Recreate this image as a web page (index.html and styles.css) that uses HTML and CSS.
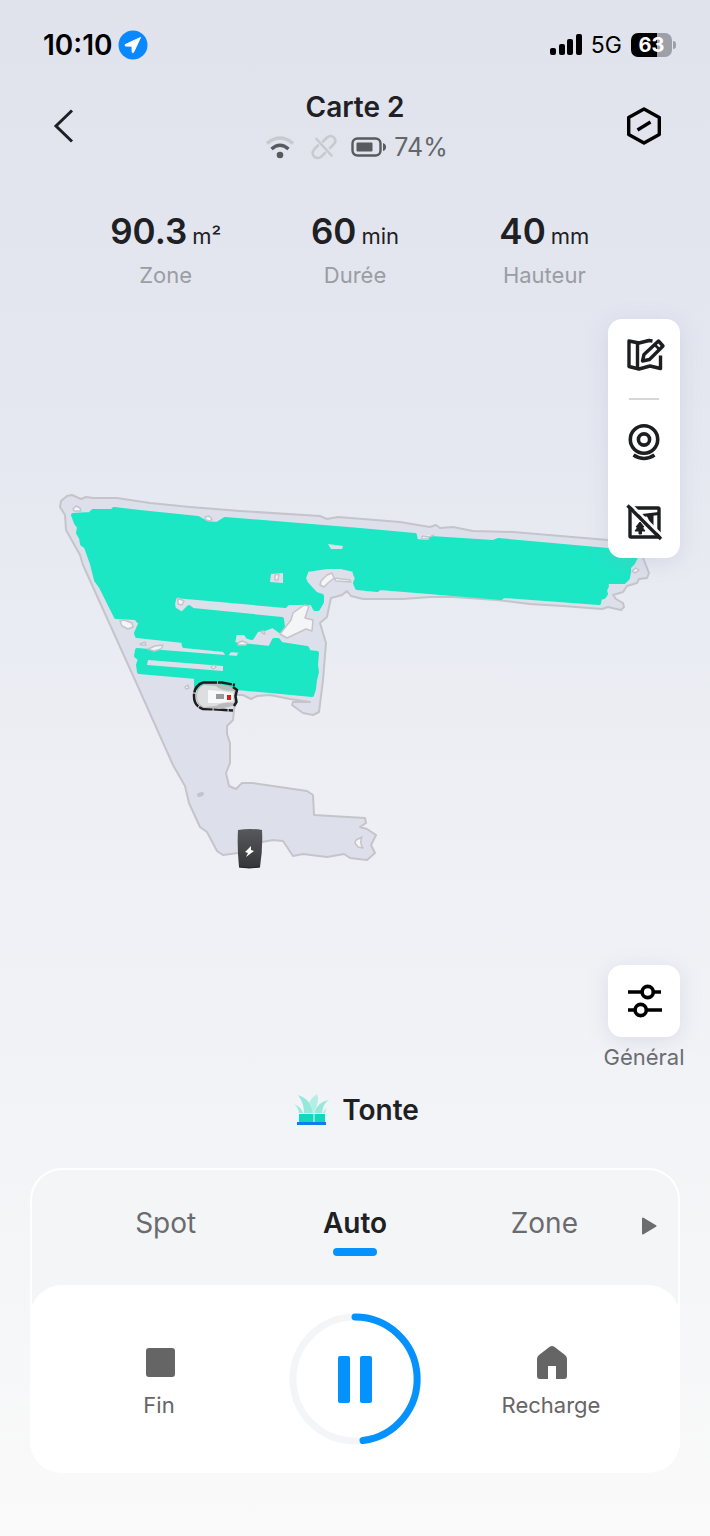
FILE: index.html
```
<!DOCTYPE html>
<html lang="fr">

<head>
    <meta charset="UTF-8">
    <meta name="viewport" content="width=device-width, initial-scale=1.0">
    <title>Carte 2</title>
    <link rel="stylesheet" href="styles.css">
</head>

<body>
    <div class="status-bar">
        <div class="status-left">
            <span class="clock">10:10</span>
            <svg width="30" height="30" viewBox="0 0 30 30">
                <circle cx="15" cy="15" r="14.5" fill="#0a88ff" />
                <path d="M22.5 7.5 L7.2 14.6 Q6.6 15.8 7.8 16 L14 16.2 L14.2 22.2 Q14.8 23.4 15.6 22.2 Z" fill="#fff" stroke="#fff" stroke-linejoin="round" />
            </svg>
        </div>
        <div class="status-right">
            <svg width="32" height="22" viewBox="0 0 32 22">
                <rect x="0" y="14" width="6" height="7" rx="2" />
                <rect x="9" y="10" width="6" height="11" rx="2" />
                <rect x="17" y="5" width="6" height="16" rx="2" />
                <rect x="26" y="0" width="6" height="21" rx="2" />
            </svg>
            <span class="network">5G</span>
            <div class="phone-battery"><span>63</span></div>
        </div>
    </div>

    <header class="header">
        <button class="icon-button" aria-label="Retour">
            <svg width="40" height="40" viewBox="0 0 40 40" fill="none" stroke="#1e2023" stroke-width="3">
                <path d="M26 4.500 L10 20 L26 35.500" />
            </svg>
        </button>
        <div class="title">
            <h1>Carte 2</h1>
            <div class="device-state">
                <svg width="30" height="24" viewBox="0 0 30 24" fill="none" stroke-width="3.500">
                    <path d="M2 8.500 Q15 -2.500 28 8.500" stroke="#c8cacf" />
                    <path d="M6.500 14 Q15 6.500 23.500 14" stroke="#575a5f" />
                    <circle cx="15" cy="20" r="3.300" fill="#575a5f" />
                </svg>
                <svg class="link-icon" width="26" height="26" viewBox="0 0 26 26" fill="none" stroke="#c8cacf" stroke-width="2.600" stroke-linecap="round">
                    <path d="M12 7.500 L16 3.500 Q19.500 0.500 23 3.500 Q26 7 22.500 10.500 L19 14" />
                    <path d="M7 11.500 L3.500 15 Q0 19 3 22.500 Q6.500 25.500 10.500 22.500 L14 19" />
                    <path d="M5.500 5 L20.500 21.500" />
                </svg>
                <svg width="36" height="22" viewBox="0 0 36 22">
                    <rect x="1.500" y="2.500" width="28" height="17" rx="5" fill="none" stroke="#575a5f" stroke-width="2.400" />
                    <rect x="5.500" y="6.500" width="16" height="9" rx="1" fill="#575a5f" />
                    <path d="M32 7 Q35 8 35 11 Q35 14 32 15 Z" fill="#575a5f" />
                </svg>
                <span>74%</span>
            </div>
        </div>
        <button class="icon-button" aria-label="Paramètres">
            <svg width="40" height="40" viewBox="0 0 40 40" fill="none" stroke="#000" stroke-width="3.400" stroke-linejoin="round">
                <path d="M20 3 L35.300 11.500 V28.500 L20 37 L4.700 28.500 V11.500 Z" />
                <path d="M13.500 24 L26.500 16" />
            </svg>
        </button>
    </header>

    <div class="stats">
        <div class="stat">
            <div class="stat-value">90.3<small>m²</small></div>
            <div class="stat-label">Zone</div>
        </div>
        <div class="stat">
            <div class="stat-value">60<small>min</small></div>
            <div class="stat-label">Durée</div>
        </div>
        <div class="stat">
            <div class="stat-value">40<small>mm</small></div>
            <div class="stat-label">Hauteur</div>
        </div>
    </div>

    <main class="stage">
        <svg class="map" viewBox="0 319 710 751">
            <!-- garden outline -->
            <path class="ground" d="M60 507 L61 501 L67 496 L72 495 L81 499 L86 497 L93 498 L117 498 L150 503 L190 507 L240 511 L320 516 L327 519 L338 517 L400 522 L430 527 L436 525 L440 528 L453 527 L473 531 L513 532 L608 540 L640 550 L649 573 L647 578 L639 579 L637 583 L627 586 L623 592 L613 595 L616 599 L623 603 L624 607 L621 610 L608 607 L602 609 L563 606 L530 604 L497 600 L453 597 L430 597 L403 599 L363 599 L351 596 L347 591 L342 595 L331 598 L329 607 L327 617 L320 623 L326 643 L323 680 L319 712 L313 715 L303 713 L292 705 L293 702 L310 702 L290 699 L270 695 L257 696 L251 699 L243 695 L236 695 L234 710 L233 720 L227 726 L227 734 L230 743 L230 763 L226 773 L229 786 L236 789 L242 783 L253 783 L307 791 L313 795 L314 815 L365 818 L366 823 L360 827 L367 829 L376 835 L371 845 L375 853 L367 860 L350 858 L344 854 L327 857 L303 854 L293 856 L283 841 L273 840 L262 842 L238 853 L223 855 L217 851 L207 832 L200 827 L189 803 L185 786 L173 765 L135 680 L83 565 L80 555 L66 530 L65 515 Z" />
            <!-- mowed area -->
            <path class="mowed" d="M73 515 L90 514 L93 511 L112 511 L114 509 L140 512 L198 518 L207 523 L217 524 L225 519 L360 530 L415 535 L416 541 L430 542 L431 538 L493 542 L498 540 L608 550 L636 557 L633 563 L629 567 L629 572 L628 578 L624 582 L606 582 L607 586 L605 590 L606 594 L604 597 L600 598 L599 603 L503 596 L501 598 L380 588 L377 590 L357 588 L355 583 L357 578 L355 574 L354 570 L341 567 L327 567 L307 570 L304 578 L306 583 L316 594 L322 596 L322 602 L318 609 L315 609 L312 603 L288 603 L285 606 L175 596 L173 604 L174 609 L182 614 L189 607 L193 610 L282 619 L283 627 L280 631 L273 626 L265 629 L257 630 L252 638 L248 637 L245 633 L235 633 L233 644 L270 648 L274 640 L278 640 L281 644 L307 648 L309 652 L317 653 L316 665 L317 672 L315 680 L314 689 L312 695 L237 688 L233 686 L196 688 L196 677 L139 672 L138 665 L140 659 L136 656 L137 650 L238 658 L241 651 L230 650 L227 654 L224 650 L184 646 L183 641 L137 636 L136 633 L140 624 L147 623 L138 621 L136 618 L116 617 L101 587 L96 580 L92 564 L86 547 L82 544 L81 538 L78 533 L79 527 L76 523 Z" />
            <path class="gap" d="M148 660 L223 666 V671 L147 665 Z M271 574 L283 573 V583 L270 582 Z M328 544 L343 546 L342 549 L331 549 Z" />
            <!-- obstacles -->
            <path class="obstacle" d="M73 509 L76 506 L80 508 L81 511 L74 511 Z M205 517 L209 516 L212 519 L210 521 L206 520 Z M120 621 L124 620 L132 623 L133 627 L128 629 L122 626 Z M148 649 L155 646 L163 645 L161 649 L154 651 Z M178 598 L184 601 L182 605 L178 604 Z M275 575 L279 574 L278 580 L275 580 Z M321 581 L327 575 L332 573 L334 578 L328 583 L324 587 L320 585 Z M334 578 L350 580 L351 582 L336 581 Z M304 605 L309 606 L305 618 L313 620 L312 631 L306 629 L287 638 L280 634 L291 620 L293 613 Z M238 643 L242 641 L247 643 L246 645 L238 645 Z M422 536 L429 537 L434 535 M422 536 L422 539 L429 539 M262 631 L264 631 L265 634 L262 633 Z M632 571 L636 568 L639 570 L635 573 Z M140 644 L145 642 L146 645 L141 645 Z M185 687 L188 685 L189 688 L186 689 Z M211 667 L214 665 L216 667 L213 669 Z M356 840 L362 837 Q359 843 363 848 L358 847 L355 843 Z" />
            <path class="stone" d="M199 795 L202 794" />
            <!-- mower -->
            <g>
                <path d="M203 682.500 H222 L235 685 M203 682.500 Q194 686 194 696 Q194 706 203 709 L218 709.500 L233 710.500" fill="none" stroke="#1c1d1f" stroke-width="2.500" stroke-dasharray="14 1" />
                <path d="M204 684 H220 L236 688 V705 L220 709 L204 708 Q196 705 196 696 Q196 687 204 684 Z" fill="#b9bbbd" />
                <path d="M204 685 L216 686 Q220 691 234 691 V703 Q222 702 216 706 L204 707 Q197 704 197 696 Q197 688 204 685 Z" fill="#dcdee0" />
                <path d="M208 690 L220 691 L233 693 V701 L220 703 L208 703 Z" fill="#f7f8f8" />
                <path d="M233 687 L237 690 L235.500 696 L236.500 702 L234 706" fill="none" stroke="#1c1d1f" stroke-width="2.500" />
                <rect x="216" y="694" width="8" height="5" fill="#97999b" />
                <rect x="227" y="695" width="4" height="5" fill="#e3171e" />
            </g>
            <!-- charging station -->
            <g>
                <linearGradient id="station" x1="0" y1="0" x2="0" y2="1">
                    <stop offset="0" stop-color="#58595c" />
                    <stop offset="1" stop-color="#343539" />
                </linearGradient>
                <path d="M238 830 Q250 828 262 830 Q263 848 260 867 Q249 869 239 867 Q237 848 238 830 Z" fill="url(#station)" />
                <path d="M239 867 Q249 869 260 867" fill="none" stroke="#1f2023" />
                <path d="M251 846 L245 852 L248 853 L246 857 L254 851 L251 850 Z" fill="#fff" />
            </g>
        </svg>

        <div class="side">
            <div class="tools">
                <button class="icon-button" aria-label="Modifier la carte">
                    <svg width="40" height="40" viewBox="0 0 40 40" fill="none" stroke="#1d1e20" stroke-width="3.400" stroke-linejoin="round">
                        <path d="M28.500 6 L25 5.500 L15 8 L5 6 V31.500 L15 34 L26 31 L36.500 33.500 V20.500" />
                        <path d="M13.500 8 V33" />
                        <path d="M18.500 26 L20 19.500 L34.500 6 L39 11 L25.500 24.500 Z" />
                        <path d="M30.500 9.500 L35.500 14.500" stroke-width="2.600" />
                    </svg>
                </button>
                <hr>
                <button class="icon-button" aria-label="Caméra">
                    <svg width="40" height="40" viewBox="0 0 40 40" fill="none" stroke="#1d1e20" stroke-width="3.600">
                        <circle cx="20" cy="18.500" r="13.700" />
                        <circle cx="20" cy="18.500" r="5.600" />
                        <path d="M9.500 34 Q20 41 30.500 34" />
                    </svg>
                </button>
                <button class="icon-button last" aria-label="Masquer le fond">
                    <svg width="40" height="40" viewBox="0 0 40 40" fill="none" stroke="#1d1e20" stroke-width="3.400">
                        <rect x="6" y="6" width="29" height="29" rx="1" />
                        <path d="M14 14 L35 11.500 M24 13 L28 21 M28 12 V24" stroke-width="3" />
                        <path d="M16 20 L20 25 H18 L21 29 H17.500 V32 H15 V29 H11 L14 25 H12 Z" fill="#1d1e20" stroke="#1d1e20" stroke-width="1" />
                        <path d="M6.500 2 L38.500 34" stroke="#fff" stroke-width="2.500" />
                        <path d="M3.500 3.500 L37 37" stroke-width="3.400" />
                    </svg>
                </button>
            </div>

            <div class="general">
                <button class="general-button" id="general" aria-labelledby="general-label">
                    <svg width="40" height="40" viewBox="0 0 40 40" fill="#fff" stroke="#000" stroke-width="3.600">
                        <path d="M4 11 H37 M4 29 H38" />
                        <circle cx="23.700" cy="11" r="5.600" />
                        <circle cx="16.700" cy="29" r="5.600" />
                    </svg>
                </button>
                <label for="general" id="general-label">Général</label>
            </div>
        </div>
    </main>

    <div class="mode">
        <svg width="34" height="34" viewBox="0 0 34 34">
            <path d="M3 2 Q16 6 18 20 H9 Q9 10 3 2 Z" fill="#96e7dc" />
            <path d="M22 1 Q25 8 19 20 H18 Q17 14 14.500 9 Q17 4 22 1 Z" fill="#b4efe7" />
            <path d="M34 7 Q28 10 27 20 H19.500 Q22 9 34 7 Z" fill="#96e7dc" />
            <path d="M-1 11 Q6 14 8 20 H4 Q4 15 -1 11 Z M32 15 Q29 17 28 20 H30 Q30 17 32 15 Z" fill="#96e7dc" />
            <path d="M4 21 H18.500 V29 H4 Z M19.500 21 H30 V29 H19.500 Z" fill="#12d6c0" />
            <path d="M2 29 H31 V32 H2 Z" fill="#0d7df2" />
        </svg>
        <h2>Tonte</h2>
    </div>

    <section class="panel">
        <nav class="tabs">
            <button class="tab">Spot</button>
            <button class="tab active">Auto</button>
            <button class="tab">Zone</button>
            <button class="icon-button more" aria-label="Suivant">
                <svg width="20" height="20" viewBox="0 0 20 20">
                    <path d="M4 2.500 L16.500 10 L4 17.500 Z" fill="#6d6d6f" stroke="#6d6d6f" stroke-width="2" stroke-linejoin="round" />
                </svg>
            </button>
        </nav>
        <div class="controls">
            <button class="control">
                <svg width="36" height="36" viewBox="0 0 36 36">
                    <rect x="5" y="3" width="29" height="29" rx="3" fill="#656565" />
                </svg>
                Fin
            </button>
            <button class="pause" aria-label="Pause">
                <svg width="132" height="132" viewBox="0 0 132 132" fill="none" stroke-width="7">
                    <circle cx="66" cy="66" r="62" stroke="#f3f5f7" />
                    <path d="M66 4 A62 62 0 0 1 74 127.500" stroke="#0692fd" stroke-linecap="round" />
                    <rect x="49" y="43" width="12" height="47" rx="2" fill="#0692fd" />
                    <rect x="71" y="43" width="12" height="47" rx="2" fill="#0692fd" />
                </svg>
            </button>
            <button class="control">
                <svg width="36" height="36" viewBox="0 0 36 36">
                    <path d="M17 1.500 Q19 0.500 21 1.500 L32 10 Q34 11.500 34 14 V31 Q34 34 31 34 H23 V21 H15 V34 H7 Q4 34 4 31 V14 Q4 11.500 6 10 Z" fill="#656565" />
                </svg>
                Recharge
            </button>
        </div>
    </section>
</body>

</html>
```
FILE: styles.css
```
* {
    box-sizing: border-box;
}

body {
    margin: 0;
    min-height: 100vh;
    background: linear-gradient(#e0e3ec 0%, #e4e7f0 25%, #edeff4 52%, #f3f4f7 75%, #fafafa 100%);
    color: #1e2023;
    font-family: Inter, 'Liberation Sans', sans-serif;
}

button {
    margin: 0;
    padding: 0;
    border: none;
    background: none;
    color: inherit;
    font-family: inherit;
    cursor: pointer;
}

svg {
    display: block;
    overflow: visible;
}

h1,
h2 {
    margin: 0;
    font-size: 28px;
    font-weight: 600;
    line-height: 40px;
}

.status-bar {
    display: flex;
    justify-content: space-between;
    align-items: center;
    height: 40px;
    margin-top: 25px;
    padding: 0 34px 0 43px;
    color: #000;
}

.status-left,
.status-right {
    display: flex;
    align-items: center;
}

.status-left {
    gap: 5px;
}

.status-right {
    gap: 9px;
}

.clock {
    font-size: 28px;
    font-weight: 600;
}

.network {
    font-size: 23px;
}

.phone-battery {
    position: relative;
    width: 41px;
    height: 24px;
    margin-right: 4px;
    border-radius: 7px;
    background: linear-gradient(90deg, #000 63%, #9da0a8 63%);
    color: #fff;
    font-size: 20px;
    font-weight: 700;
    line-height: 24px;
    text-align: center;
}

.phone-battery::after {
    content: "";
    position: absolute;
    top: 8px;
    right: -4px;
    width: 3px;
    height: 8px;
    border-radius: 0 3px 3px 0;
    background-color: #9da0a8;
}

.header {
    display: flex;
    justify-content: space-between;
    align-items: center;
    padding: 22px 46px 0;
}

.header .icon-button {
    margin: 0 0 2px;
}

.title {
    text-align: center;
}

.device-state {
    display: flex;
    align-items: center;
    height: 40px;
    padding-left: 3px;
    color: #63666b;
    font-size: 25px;
}

.link-icon {
    margin: 0 14px 0 16px;
}

.device-state span {
    margin-left: 7px;
}

.stats {
    display: grid;
    grid-template-columns: repeat(3, 1fr);
    padding: 41px 10% 0;
    text-align: center;
}

.stat-value {
    font-size: 35px;
    font-weight: 600;
    line-height: 46px;
}

.stat-value small {
    margin-left: 5px;
    font-size: 22px;
    font-weight: 400;
}

.stat-label {
    color: #9a9da2;
    font-size: 22px;
    line-height: 32px;
}

/* the map and the buttons over it share one cell */
.stage {
    display: grid;
    margin-top: 28px;
}

.map,
.side {
    grid-area: 1 / 1;
}

.map {
    width: 100%;
}

.ground {
    fill: #dde0ea;
    stroke: #c5c4cb;
    stroke-width: 2;
    stroke-linejoin: round;
}

.mowed {
    fill: #1be7c5;
    stroke: #1be7c5;
    stroke-width: 4;
    stroke-linejoin: round;
}

.gap {
    fill: #dde0ea;
}

.obstacle {
    fill: #f4f5f7;
    stroke: #c5c4cb;
    stroke-width: 1.5;
    stroke-linejoin: round;
}

.stone {
    stroke: #c5c4cb;
    stroke-width: 4;
    stroke-linecap: round;
}

.side {
    display: flex;
    flex-direction: column;
    justify-content: space-between;
    align-items: center;
    justify-self: end;
    width: 80px;
    margin-right: 26px;
    z-index: 1;
}

.tools,
.general-button {
    width: 72px;
    border-radius: 14px;
    background-color: #fff;
    box-shadow: 0 4px 20px rgba(150, 165, 190, 0.25);
}

.tools {
    display: flex;
    flex-direction: column;
    align-items: center;
    padding: 16px 0;
}

.tools hr {
    width: 30px;
    height: 2px;
    margin: 23px 0 21px;
    border: none;
    background-color: #d6d7d9;
}

.tools .last {
    margin-top: 41px;
}

.general {
    display: flex;
    flex-direction: column;
    align-items: center;
}

.general-button {
    height: 72px;
    padding: 16px;
}

.general label {
    padding-top: 4px;
    color: #6a6d71;
    font-size: 22px;
    line-height: 32px;
    white-space: nowrap;
}

.general {
    margin-bottom: -3px;
}

.mode {
    display: flex;
    justify-content: center;
    align-items: center;
    gap: 13px;
    margin-top: 20px;
    padding-left: 4px;
}

.panel {
    margin: 38px 30px 62px;
    border: 2px solid #fff;
    border-bottom: none;
    border-radius: 32px;
    background-color: #f4f5f7;
}

.tabs {
    display: grid;
    grid-template-columns: repeat(3, 1fr) 39px;
    padding-left: 39px;
    height: 115px;
}

.tab {
    display: flex;
    flex-direction: column;
    align-items: center;
    padding-top: 33px;
    color: #6a6b6e;
    font-size: 28px;
    line-height: 40px;
}

.tab.active {
    color: #1e2023;
    font-weight: 600;
}

.tab.active::after {
    content: "";
    width: 44px;
    height: 8px;
    margin-top: 5px;
    border-radius: 4px;
    background-color: #0692fd;
}

.more {
    align-self: start;
    justify-self: start;
    margin-top: 46px;
}

.controls {
    display: grid;
    grid-template-columns: repeat(3, 1fr);
    align-items: center;
    margin: 0 -2px;
    padding: 28px 31px;
    border-radius: 32px;
    background-color: #fff;
}

.control {
    display: flex;
    flex-direction: column;
    align-items: center;
    gap: 8px;
    padding-top: 8px;
    color: #656565;
    font-size: 22px;
    line-height: 32px;
}

.pause {
    justify-self: center;
}
```
